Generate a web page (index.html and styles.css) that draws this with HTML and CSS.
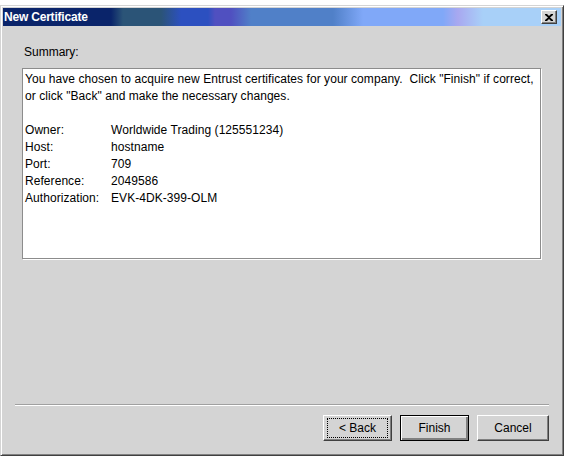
FILE: index.html
```html
<!DOCTYPE html>
<html lang="en">
<head>
    <meta charset="UTF-8">
    <title>New Certificate</title>
    <link rel="stylesheet" href="styles.css">
</head>
<body>
    <div class="window">
        <div class="titlebar">
            <span class="title">New Certificate</span>
            <button class="close-btn" aria-label="Close">
                <svg width="8" height="7" viewBox="0 0 8 7">
                    <path d="M0 0h2l2 2 2-2h2v1L5 3.5 8 6v1H6L4 5 2 7H0V6l3-2.5L0 1z" fill="#000"/>
                </svg>
            </button>
        </div>
        <div class="content">
            <div class="label">Summary:</div>
            <div class="summary-box">
                <p>You have chosen to acquire new Entrust certificates for your company.&nbsp; Click "Finish" if correct, or click "Back" and make the necessary changes.</p>
                <table class="details">
                    <tr><td class="key">Owner:</td><td>Worldwide Trading (125551234)</td></tr>
                    <tr><td class="key">Host:</td><td>hostname</td></tr>
                    <tr><td class="key">Port:</td><td>709</td></tr>
                    <tr><td class="key">Reference:</td><td>2049586</td></tr>
                    <tr><td class="key">Authorization:</td><td>EVK-4DK-399-OLM</td></tr>
                </table>
            </div>
        </div>
        <div class="footer">
            <div class="separator"></div>
            <div class="buttons">
                <button class="btn focused"><span>&lt; Back</span></button>
                <button class="btn default"><span>Finish</span></button>
                <button class="btn"><span>Cancel</span></button>
            </div>
        </div>
    </div>
</body>
</html>
```

FILE: styles.css
```css
body {
    margin: 0;
    padding-top: 5px;
    background: #fff;
    font-family: "Liberation Sans", Arial, sans-serif;
    font-size: 12px;
    color: #000;
}
.window {
    box-sizing: border-box;
    width: 564px;
    height: 451px;
    background: #d4d4d4;
    border-top: 1px solid #d4d4d4;
    border-left: 1px solid #d4d4d4;
    border-right: 1px solid #404040;
    border-bottom: 1px solid #404040;
    box-shadow: inset 1px 1px 0 #fff, inset -1px -1px 0 #808080;
    padding: 2px;
    display: flex;
    flex-direction: column;
}
.titlebar {
    height: 18px;
    display: flex;
    align-items: center;
    justify-content: space-between;
    padding: 0 4px 0 1px;
    background: linear-gradient(to right,
        #0a246a 0, #0a246a 108px,
        #2b5477 120px, #2b5477 158px,
        #2c50c0 178px, #2c50c0 205px,
        #5050c0 212px, #5050c0 228px,
        #5080c8 248px, #5080c8 330px,
        #80a8f8 360px, #80a8f8 440px,
        #a8a8f0 455px, #a8d0f8 480px, #a8d0f8 100%);
}
.title {
    color: #fff;
    font-weight: bold;
    font-size: 12px;
    letter-spacing: -0.2px;
}
.close-btn {
    box-sizing: border-box;
    width: 16px;
    height: 14px;
    padding: 0;
    background: #d4d4d4;
    border: 1px solid;
    border-color: #fff #404040 #404040 #fff;
    box-shadow: inset -1px -1px 0 #808080;
    display: flex;
    align-items: center;
    justify-content: center;
}
.content {
    flex: 1;
    padding: 18px 20px 0 19px;
}
.label {
    line-height: 17px;
    padding-left: 2px;
    margin-bottom: 7px;
}
.summary-box {
    box-sizing: border-box;
    height: 191px;
    background: #fff;
    border: 1px solid #8c8c8c;
    box-shadow: 1px 1px 0 #fff;
    padding: 2px 2px 1px;
    line-height: 17px;
    letter-spacing: 0.06px;
}
.summary-box p {
    margin: 0 0 17px;
}
.details {
    border-collapse: collapse;
}
.details td {
    padding: 0;
    line-height: 17px;
}
.details .key {
    width: 86px;
}
.footer {
    padding: 0 12px 12px 12px;
}
.separator {
    height: 1px;
    background: #a0a0a0;
    border-bottom: 1px solid #fff;
    margin-bottom: 9px;
}
.buttons {
    display: flex;
    justify-content: flex-end;
    gap: 8px;
}
.btn {
    box-sizing: border-box;
    width: 69px;
    height: 26px;
    padding: 0;
    background: #d4d4d4;
    font-family: "Liberation Sans", Arial, sans-serif;
    font-size: 12px;
    color: #000;
    border: 1px solid;
    border-color: #fff #404040 #404040 #fff;
    box-shadow: inset -1px -1px 0 #808080;
}
.btn:last-child {
    width: 72px;
}
.btn.default {
    border-color: #000;
    box-shadow: inset 1px 1px 0 #fff, inset -2px -2px 0 #808080;
}
.btn.focused span {
    display: block;
    margin: 0 3px;
    line-height: 18px;
    border: 1px dotted #000;
}
```
